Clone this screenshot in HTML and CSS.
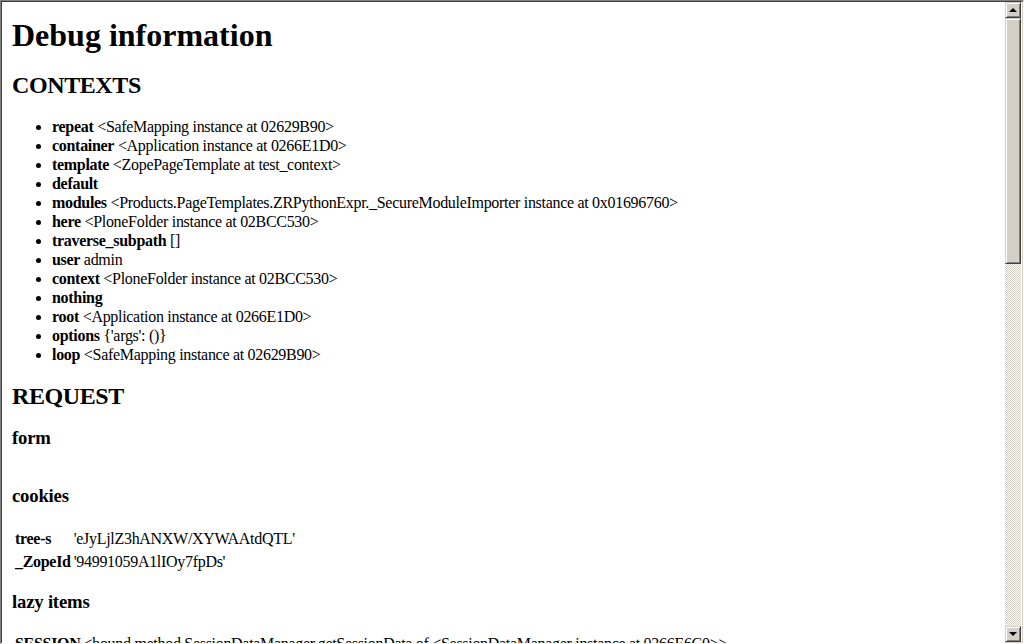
FILE: index.html
```html
<!DOCTYPE html>
<html>
<head>
<meta charset="utf-8">
<title>Debug information</title>
<link rel="stylesheet" href="styles.css">
</head>
<body>
<div class="frame">
  <div class="page">
    <h1 class="title">Debug information</h1>
    <h2 class="section section-contexts">CONTEXTS</h2>
    <ul class="ctx-list">
      <li><b>repeat</b> &lt;SafeMapping instance at 02629B90&gt;</li>
      <li><b>container</b> &lt;Application instance at 0266E1D0&gt;</li>
      <li><b>template</b> &lt;ZopePageTemplate at test_context&gt;</li>
      <li><b>default</b></li>
      <li><b>modules</b> &lt;Products.PageTemplates.ZRPythonExpr._SecureModuleImporter instance at 0x01696760&gt;</li>
      <li><b>here</b> &lt;PloneFolder instance at 02BCC530&gt;</li>
      <li><b>traverse_subpath</b> []</li>
      <li><b>user</b> admin</li>
      <li><b>context</b> &lt;PloneFolder instance at 02BCC530&gt;</li>
      <li><b>nothing</b></li>
      <li><b>root</b> &lt;Application instance at 0266E1D0&gt;</li>
      <li><b>options</b> {'args': ()}</li>
      <li><b>loop</b> &lt;SafeMapping instance at 02629B90&gt;</li>
    </ul>
    <h2 class="section section-request">REQUEST</h2>
    <h3 class="sub sub-form">form</h3>
    <h3 class="sub sub-cookies">cookies</h3>
    <table class="kv kv-cookies">
      <tr><th>tree-s</th><td>'eJyLjlZ3hANXW/XYWAAtdQTL'</td></tr>
      <tr><th>_ZopeId</th><td>'94991059A1lIOy7fpDs'</td></tr>
    </table>
    <h3 class="sub sub-lazy">lazy items</h3>
    <table class="kv kv-lazy">
      <tr><th>SESSION</th><td>&lt;bound method SessionDataManager.getSessionData of &lt;SessionDataManager instance at 0266E6C0&gt;&gt;</td></tr>
    </table>
  </div>
  <div class="scrollbar">
    <div class="sb-btn"><span class="arrow-up"></span></div>
    <div class="sb-thumb"></div>
    <div class="sb-track"></div>
    <div class="sb-btn"><span class="arrow-down"></span></div>
  </div>
</div>
</body>
</html>
```
FILE: styles.css
```css
html, body {
  margin: 0;
  padding: 0;
  background: #ffffff;
}

.frame {
  width: 1024px;
  height: 644px;
  box-sizing: border-box;
  border-top: 1px solid #808080;
  border-left: 1px solid #808080;
  border-right: 1px solid #ffffff;
  border-bottom: 1px solid #ffffff;
  display: flex;
  overflow: hidden;
}

.page {
  flex: 1;
  min-width: 0;
  height: 642px;
  overflow: hidden;
  border-top: 1px solid #404040;
  border-left: 1px solid #404040;
  box-sizing: border-box;
  padding: 15px 0 0 10px;
  font-family: "Liberation Serif", "Times New Roman", serif;
  font-size: 16px;
  letter-spacing: -0.3px;
  color: #000000;
  white-space: nowrap;
}

.title {
  margin: 0;
  font-size: 32px;
  line-height: 37px;
  font-weight: bold;
  letter-spacing: 0;
}

.section {
  margin: 18px 0 0 0;
  font-size: 24px;
  line-height: 28px;
  font-weight: bold;
  letter-spacing: -0.4px;
}

.section-contexts {
  margin-top: 17px;
}

.ctx-list {
  margin: 18px 0 0 0;
  padding: 0 0 0 40px;
  list-style: disc;
}

.ctx-list li {
  line-height: 19px;
}

.sub {
  font-size: 18.72px;
  line-height: 22px;
  font-weight: bold;
  margin: 17px 0 0 0;
  letter-spacing: -0.2px;
}

.sub-cookies {
  margin-top: 36px;
}

.sub-lazy {
  margin-top: 17px;
}

.kv {
  border-collapse: separate;
  border-spacing: 2px;
  font-size: 16px;
}

.kv-cookies {
  margin-top: 19px;
}

.kv-lazy {
  margin-top: 18px;
}

.kv th,
.kv td {
  padding: 1px;
  line-height: 19px;
  text-align: left;
  vertical-align: top;
}

.kv th {
  font-weight: bold;
  padding-right: 0;
}

.kv td {
  font-weight: normal;
  padding-left: 1px;
}

.scrollbar {
  height: 642px;
  box-sizing: border-box;
  border-top: 1px solid #404040;
  border-right: 1px solid #d4d0c8;
  border-bottom: 1px solid #d4d0c8;
  width: 18px;
  padding: 0 1px 0 0;
  display: flex;
  flex-direction: column;
  background: #ffffff;
}

.sb-btn,
.sb-thumb {
  flex: none;
  box-sizing: border-box;
  width: 16px;
  background: #d4d0c8;
  border-top: 1px solid #d4d0c8;
  border-left: 1px solid #d4d0c8;
  border-right: 1px solid #404040;
  border-bottom: 1px solid #404040;
  box-shadow: inset 1px 1px 0 #ffffff, inset -1px -1px 0 #808080;
}

.sb-btn {
  height: 16px;
  display: flex;
  align-items: center;
  justify-content: center;
}

.sb-thumb {
  height: 246px;
}

.sb-track {
  flex: 1;
  width: 16px;
  background-color: #ffffff;
  background-image: repeating-conic-gradient(#d4d0c8 0 25%, #ffffff 0 50%);
  background-size: 2px 2px;
}

.arrow-up,
.arrow-down {
  display: block;
  width: 0;
  height: 0;
  border-left: 4px solid transparent;
  border-right: 4px solid transparent;
}

.arrow-up {
  border-bottom: 4px solid #000000;
  margin-top: -1px;
}

.arrow-down {
  border-top: 4px solid #000000;
}
```
